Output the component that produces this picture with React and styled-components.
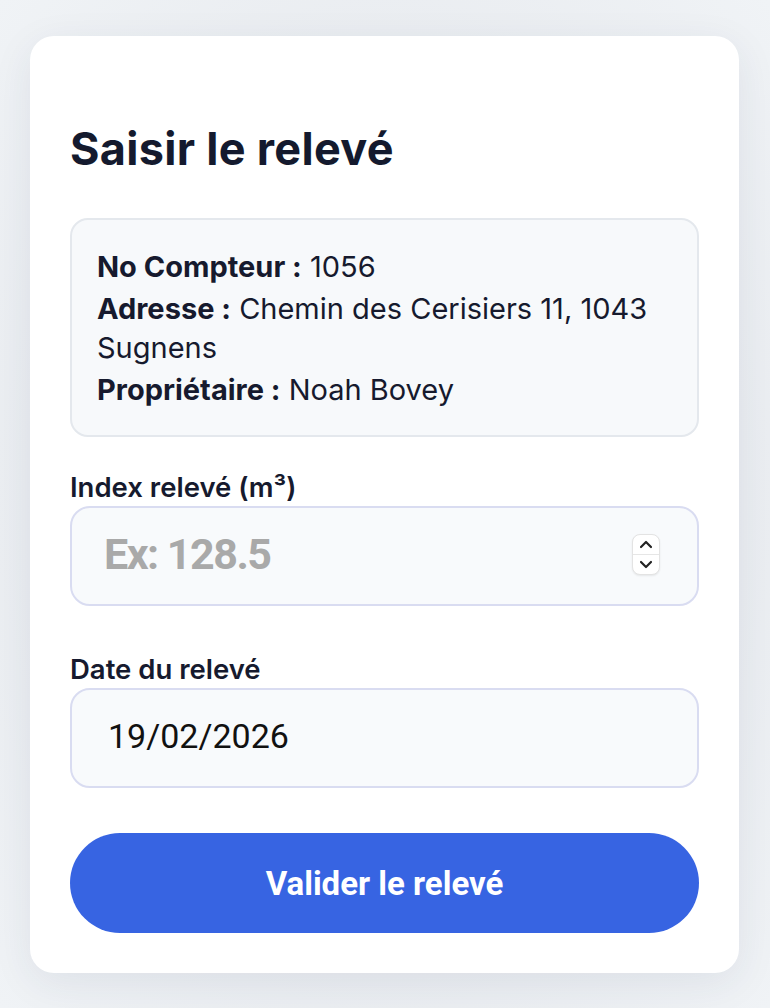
import React from "react";
import styled, { createGlobalStyle } from "styled-components";

const GlobalStyle = createGlobalStyle`
  html, body {
    margin: 0;
    padding: 0;
    background: #eceff3;
  }
  body {
    font-family: Inter, "Noto Sans", sans-serif;
    color: #161a2e;
  }
  * { box-sizing: border-box; }
`;

const Page = styled.div`
  min-height: 1008px;
  padding-top: 36px;
  background: radial-gradient(ellipse at center, #e6e9ee 0%, #e9ecf0 60%, #f0f3f6 100%);
`;

const Card = styled.div`
  width: 709px;
  margin: 0 0 0 30px;
  background: #ffffff;
  border-radius: 24px;
  padding: 90px 40px 40px;
  box-shadow: 0 10px 40px rgba(40, 55, 90, 0.08);
`;

const Title = styled.h1`
  margin: 0 0 46px;
  font-size: 45px;
  line-height: 46px;
  font-weight: 700;
  letter-spacing: 0.3px;
  color: #141a2e;
`;

const InfoBox = styled.div`
  background: #f7f9fb;
  border: 2px solid #e4e8ed;
  border-radius: 18px;
  padding: 27px 22px 26px 25px;
  margin-bottom: 35px;
`;

const InfoLine = styled.p`
  margin: 0 0 3px;
  font-size: 29px;
  line-height: 39px;
  color: #161a2e;
  &:last-child { margin-bottom: 0; }
  b { font-weight: 700; }
`;

const Field = styled.div`
  display: flex;
  flex-direction: column;
  gap: 4px;
  margin-bottom: ${(p) => p.$gap || 0}px;
`;

const Label = styled.label`
  font-size: 27.5px;
  line-height: 30px;
  font-weight: 600;
  color: #161a2e;
`;

const InputShell = styled.div`
  display: flex;
  align-items: center;
  height: 100px;
  padding: 0 37px 4px 32px;
  background: #f8fafc;
  border: 2px solid #d9dcf1;
  border-radius: 20px;
`;

const TextInput = styled.input`
  flex: 1;
  min-width: 0;
  border: none;
  outline: none;
  background: transparent;
  font-family: Roboto, "Liberation Sans", sans-serif;
  font-size: ${(p) => p.$size || 32}px;
  font-weight: ${(p) => p.$weight || 400};
  letter-spacing: ${(p) => p.$track || 0}px;
  color: #111;
  padding: 0 0 0 ${(p) => p.$indent || 0}px;
  &::placeholder { color: #a9a9a9; }
`;

const Spinner = styled.div`
  width: 28px;
  height: 41px;
  display: flex;
  flex-direction: column;
  background: #fff;
  border: 1px solid #e3e3e3;
  border-radius: 8px;
  box-shadow: 0 1px 2px rgba(0, 0, 0, 0.08);
  overflow: hidden;
`;

const SpinHalf = styled.div`
  flex: 1;
  display: flex;
  align-items: center;
  justify-content: center;
  & + & { border-top: 1px solid #e6e6e6; }
`;

const Button = styled.button`
  width: 100%;
  height: 100px;
  margin-top: 45px;
  border: none;
  border-radius: 50px;
  background: #3764e2;
  color: #fff;
  font-family: Roboto, "Liberation Sans", sans-serif;
  font-size: 33px;
  font-weight: 700;
  cursor: pointer;
`;

const Chevron = ({ up }) => (
  <svg width="14" height="9" viewBox="0 0 14 9">
    <path
      d={up ? "M2 7 L7 2 L12 7" : "M2 2 L7 7 L12 2"}
      fill="none"
      stroke="#222"
      strokeWidth="2.2"
      strokeLinecap="round"
      strokeLinejoin="round"
    />
  </svg>
);

export default function App() {
  return (
    <>
      <GlobalStyle />
      <Page>
        <Card>
          <Title>Saisir le relevé</Title>
          <InfoBox>
            <InfoLine>
              <b>No Compteur :</b> 1056
            </InfoLine>
            <InfoLine>
              <b>Adresse :</b> Chemin des Cerisiers 11, 1043 Sugnens
            </InfoLine>
            <InfoLine>
              <b>Propriétaire :</b> Noah Bovey
            </InfoLine>
          </InfoBox>
          <Field $gap={48}>
            <Label>Index relevé (m³)</Label>
            <InputShell>
              <TextInput type="text" placeholder="Ex: 128.5" $weight={700} $size={43} $track={-1.5} />
              <Spinner>
                <SpinHalf><Chevron up /></SpinHalf>
                <SpinHalf><Chevron /></SpinHalf>
              </Spinner>
            </InputShell>
          </Field>
          <Field>
            <Label>Date du relevé</Label>
            <InputShell>
              <TextInput type="text" defaultValue="19/02/2026" $size={34} $indent={4} />
            </InputShell>
          </Field>
          <Button>Valider le relevé</Button>
        </Card>
      </Page>
    </>
  );
}
